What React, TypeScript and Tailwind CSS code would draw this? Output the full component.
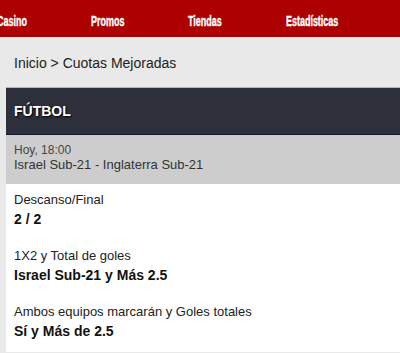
import React from "react";

const navItems = [
  { label: "Casino", w: "w-[30px]" },
  { label: "Promos", w: "w-[33px]" },
  { label: "Tiendas", w: "w-[34px]" },
  { label: "Estadísticas", w: "w-[52px]" },
];

const picks = [
  { market: "Descanso/Final", pick: "2 / 2" },
  { market: "1X2 y Total de goles", pick: "Israel Sub-21 y Más 2.5" },
  { market: "Ambos equipos marcarán y Goles totales", pick: "Sí y Más de 2.5" },
];

export default function App() {
  return (
    <div className="w-[400px] h-[353px] overflow-hidden bg-[#e9e9e9] font-['Liberation_Sans',Arial,sans-serif]">
      {/* Top menu, scrolled slightly so the first item is clipped */}
      <nav className="h-[37px] bg-[#ad0000] flex gap-[64px] -ml-[3px] pt-[9px] overflow-hidden">
        {navItems.map((item) => (
          <div key={item.label} className={`${item.w} shrink-0`}>
            <span className="inline-block origin-left scale-x-64 whitespace-nowrap text-[14px] leading-[16px] font-bold text-white [-webkit-text-stroke:0.4px_white]">
              {item.label}
            </span>
          </div>
        ))}
      </nav>

      {/* Breadcrumb */}
      <div className="pl-[14px] pt-[16px] pb-[14px] text-[14px] leading-[20px] text-[#222]">
        Inicio &gt; Cuotas Mejoradas
      </div>

      {/* Card */}
      <div className="ml-[6px] border-t border-[#b5b5b5]">
        <div className="h-[47px] bg-[#2d2f3b] border-b border-[#131a30] flex items-center pl-[8px]">
          <span className="text-[14px] font-bold text-white [text-shadow:1px_1px_2px_#000]">
            FÚTBOL
          </span>
        </div>

        <div className="h-[49px] bg-[#cdcdcd] pl-[8px] pt-[8px]">
          <div className="text-[12px] leading-[14px] text-[#444]">Hoy, 18:00</div>
          <div className="text-[13px] leading-[15px] text-[#333]">
            Israel Sub-21 - Inglaterra Sub-21
          </div>
        </div>

        <div className="bg-white">
          {picks.map((p) => (
            <div key={p.market} className="pl-[8px] pt-[6px] pb-[10px]">
              <div className="text-[13px] leading-[19px] text-[#222]">{p.market}</div>
              <div className="text-[14px] leading-[21px] font-bold text-[#111]">{p.pick}</div>
            </div>
          ))}
        </div>
      </div>
    </div>
  );
}
